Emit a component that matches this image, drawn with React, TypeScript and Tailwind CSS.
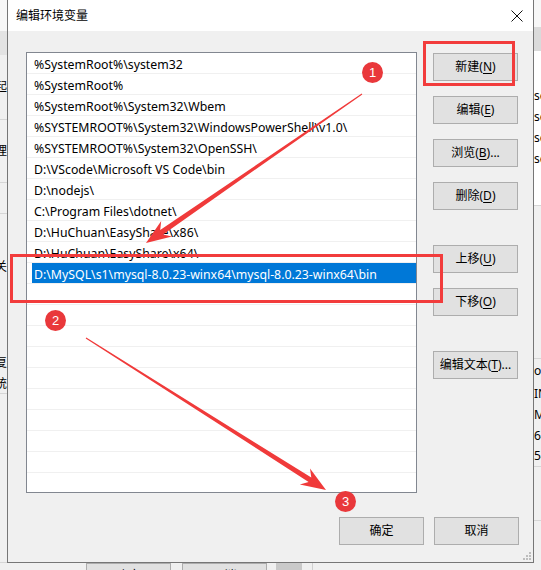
import React from "react";

const paths = [
  "%SystemRoot%\\system32",
  "%SystemRoot%",
  "%SystemRoot%\\System32\\Wbem",
  "%SYSTEMROOT%\\System32\\WindowsPowerShell\\v1.0\\",
  "%SYSTEMROOT%\\System32\\OpenSSH\\",
  "D:\\VScode\\Microsoft VS Code\\bin",
  "D:\\nodejs\\",
  "C:\\Program Files\\dotnet\\",
  "D:\\HuChuan\\EasyShare\\x86\\",
  "D:\\HuChuan\\EasyShare\\x64\\",
  "D:\\MySQL\\s1\\mysql-8.0.23-winx64\\mysql-8.0.23-winx64\\bin",
];
const SELECTED = 10;
const rows = [...paths, ...Array(11).fill("")];

function arrowPoints(x1: number, y1: number, x2: number, y2: number) {
  const len = Math.hypot(x2 - x1, y2 - y1);
  const ux = (x2 - x1) / len;
  const uy = (y2 - y1) / len;
  const nx = -uy;
  const ny = ux;
  const neck = 19;
  const head = 25;
  const hw = 9.5;
  const sw = 2.6;
  const tw = 0.5;
  const bx = x2 - ux * neck;
  const by = y2 - uy * neck;
  const hx = x2 - ux * head;
  const hy = y2 - uy * head;
  return [
    [x1 + nx * tw, y1 + ny * tw],
    [bx + nx * sw, by + ny * sw],
    [hx + nx * hw, hy + ny * hw],
    [x2, y2],
    [hx - nx * hw, hy - ny * hw],
    [bx - nx * sw, by - ny * sw],
    [x1 - nx * tw, y1 - ny * tw],
  ]
    .map((p) => p.map((v) => v.toFixed(1)).join(","))
    .join(" ");
}

function Btn({ children, className = "" }: { children: React.ReactNode; className?: string }) {
  return (
    <div
      className={`h-[28px] w-[85px] flex items-center justify-center bg-[#e1e1e1] border border-[#adadad] text-[12px] text-black ${className}`}
    >
      {children}
    </div>
  );
}

function U({ c }: { c: string }) {
  return <span className="underline underline-offset-2">{c}</span>;
}

function Badge({ n, className }: { n: string; className: string }) {
  return (
    <div
      className={`absolute w-[21px] h-[21px] rounded-full bg-[#e9383b] text-white text-[13px] leading-none flex items-center justify-center font-['Liberation_Sans',sans-serif] ${className}`}
    >
      {n}
    </div>
  );
}

function Frag({ h, text, line = true, bg = "bg-[#f0f0f0]" }: { h: number; text?: string; line?: boolean; bg?: string }) {
  return (
    <div
      style={{ height: h }}
      className={`flex items-center justify-end overflow-hidden whitespace-nowrap text-[12px] text-black ${bg} ${line ? "border-b border-[#d6d6d6]" : ""}`}
    >
      {text}
    </div>
  );
}

function FragR({ h, text, line = true, bg = "bg-[#f0f0f0]" }: { h: number; text?: string; line?: boolean; bg?: string }) {
  return (
    <div
      style={{ height: h }}
      className={`flex items-center justify-start overflow-hidden whitespace-nowrap text-[12px] text-black ${bg} ${line ? "border-b border-[#d6d6d6]" : ""}`}
    >
      {text}
    </div>
  );
}

export default function App() {
  return (
    <div className="relative w-[541px] h-[570px] overflow-hidden bg-[#f0f0f0] font-['Noto_Sans','Noto_Sans_CJK_SC',sans-serif]">
      <div className="flex h-[563px]">
        {/* window behind, left edge */}
        <div className="w-[7px] flex flex-col">
          <Frag h={31} bg="bg-[#f7f7f7]" line={false} />
          <Frag h={24} bg="bg-[#e3e3e3]" line={false} />
          <Frag h={65} text="配起" />
          <Frag h={63} text="管理" />
          <Frag h={31} line />
          <Frag h={106} text="相关" line={false} />
          <Frag h={32} line={false} />
          <Frag h={22} text="恢复" line={false} />
          <Frag h={20} text="系统" />
          <Frag h={169} />
        </div>

        {/* dialog */}
        <div className="w-[527px] flex flex-col border-l border-r border-b border-[#767676] bg-[#f0f0f0]">
          <div className="h-[31px] bg-white flex items-center justify-between pl-[8px] pr-[9px]">
            <span className="text-[12px] text-black">编辑环境变量</span>
            <svg width="12" height="12" viewBox="0 0 12 12" className="mr-[1px]">
              <path d="M0.5 0.5 L11.5 11.5 M11.5 0.5 L0.5 11.5" stroke="#111" strokeWidth="1" />
            </svg>
          </div>

          <div className="relative flex-1 pt-[21px] pl-[18px] pr-[14px]">
            <div className="flex gap-[16px]">
              <div className="w-[391px] h-[441px] border border-[#828790] bg-white overflow-hidden">
                {rows.map((p, i) => (
                  <div key={i} className="h-[21px] border-b border-[#f0f0f0] flex">
                    <div
                      className={`ml-[5px] flex-1 pl-[2px] pt-[4px] flex items-center whitespace-nowrap text-[12.3px] ${
                        i === SELECTED ? "bg-[#0078d7] text-white" : "text-black"
                      }`}
                    >
                      {p}
                    </div>
                  </div>
                ))}
              </div>

              <div className="flex flex-col pt-[1px]">
                <Btn>
                  新建(<U c="N" />)
                </Btn>
                <Btn className="mt-[15px]">
                  编辑(<U c="E" />)
                </Btn>
                <Btn className="mt-[15px]">
                  浏览(<U c="B" />)...
                </Btn>
                <Btn className="mt-[15px]">
                  删除(<U c="D" />)
                </Btn>
                <Btn className="mt-[35px]">
                  上移(<U c="U" />)
                </Btn>
                <Btn className="mt-[15px]">
                  下移(<U c="O" />)
                </Btn>
                <Btn className="mt-[35px]">
                  编辑文本(<U c="T" />)...
                </Btn>
              </div>
            </div>

            <div className="flex justify-end gap-[10px] mt-[24px]">
              <Btn>确定</Btn>
              <Btn>取消</Btn>
            </div>

            <svg width="9" height="9" className="absolute right-[2px] bottom-[2px]">
              <rect x="7" y="1" width="2" height="2" fill="#bdbdbd" />
              <rect x="4" y="4" width="2" height="2" fill="#bdbdbd" />
              <rect x="7" y="4" width="2" height="2" fill="#bdbdbd" />
              <rect x="1" y="7" width="2" height="2" fill="#bdbdbd" />
              <rect x="4" y="7" width="2" height="2" fill="#bdbdbd" />
              <rect x="7" y="7" width="2" height="2" fill="#bdbdbd" />
            </svg>
          </div>
        </div>

        {/* window behind, right edge */}
        <div className="w-[7px] flex flex-col">
          <FragR h={27} bg="bg-[#f7f7f7]" line={false} />
          <FragR h={24} bg="bg-[#dadada]" line={false} />
          <FragR h={34} bg="bg-white" line={false} />
          <FragR h={21} text="se" bg="bg-white" line={false} />
          <FragR h={21} text="se" bg="bg-white" line={false} />
          <FragR h={21} text="se" bg="bg-white" line={false} />
          <FragR h={21} text="se" bg="bg-white" line={false} />
          <FragR h={37} bg="bg-white" />
          <FragR h={153} />
          <FragR h={24} text="o" line={false} />
          <FragR h={21} text="IN" line={false} />
          <FragR h={21} text="M;" line={false} />
          <FragR h={21} text="64" line={false} />
          <FragR h={21} text="54" />
          <FragR h={54} />
        </div>
      </div>

      {/* window behind, bottom edge */}
      <div className="flex h-[7px] bg-[#f0f0f0] overflow-hidden">
        <div className="w-[86px]" />
        <div className="w-[85px] border border-b-0 border-[#adadad] bg-[#e1e1e1] flex justify-center text-[12px] leading-[24px] overflow-hidden">
          确定
        </div>
        <div className="w-[11px]" />
        <div className="w-[85px] border border-b-0 border-[#adadad] bg-[#e1e1e1] flex justify-center text-[12px] leading-[24px] overflow-hidden">
          取消
        </div>
        <div className="w-[9px]" />
        <div className="w-[26px] bg-[#c9c9c9]" />
        <div className="w-[11px] border-r border-[#d0d0d0]" />
      </div>

      {/* annotations */}
      <svg className="absolute inset-0 pointer-events-none" width="541" height="570">
        <rect x="424.5" y="42.5" width="89" height="42" fill="none" stroke="#f23c3c" strokeWidth="3" />
        <rect x="11.5" y="255.5" width="430" height="46" fill="none" stroke="#f23c3c" strokeWidth="3" />
        <polygon points={arrowPoints(362, 94, 146, 243)} fill="#f03a3a" />
        <polygon points={arrowPoints(86, 338, 326, 490)} fill="#f03a3a" />
      </svg>
      <Badge n="1" className="left-[362px] top-[62px]" />
      <Badge n="2" className="left-[45px] top-[310px]" />
      <Badge n="3" className="left-[335px] top-[491px]" />
    </div>
  );
}
